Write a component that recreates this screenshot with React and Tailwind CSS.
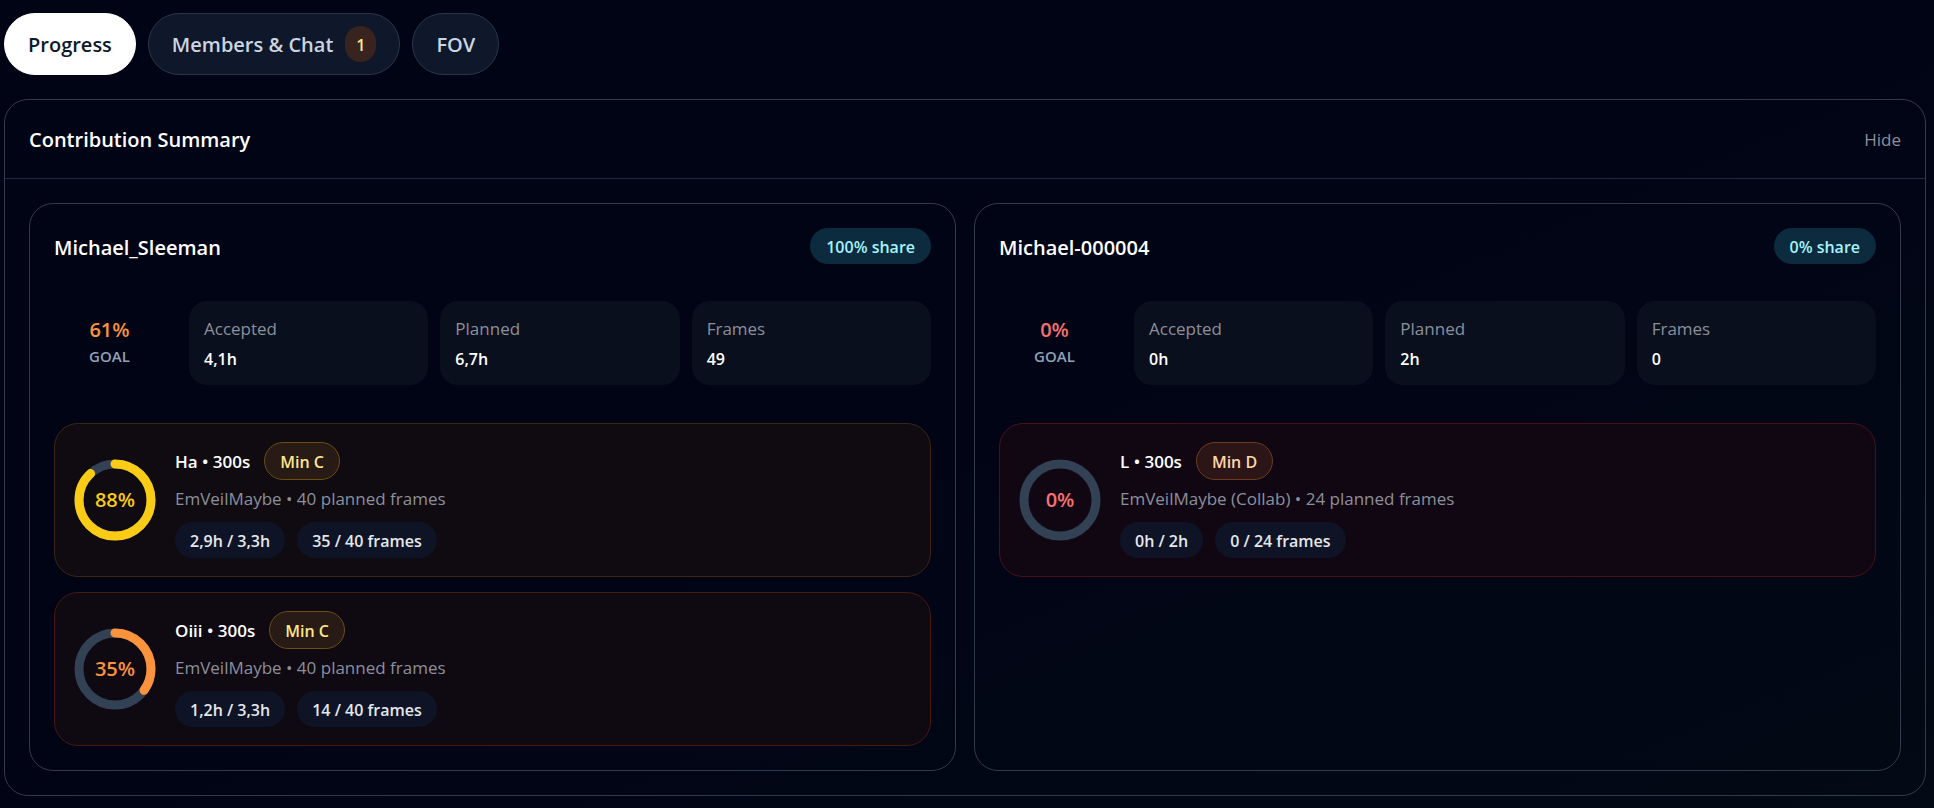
import React, { useState } from 'react';
import clsx from 'clsx';

const tabs = [
  { id: 'progress', label: 'Progress' },
  { id: 'members', label: 'Members & Chat', badge: 1 },
  { id: 'fov', label: 'FOV' },
];

const contributors = [
  {
    name: 'Michael_Sleeman',
    share: '100% share',
    goal: '61%',
    goalColor: 'text-[#fb923c]',
    stats: [
      { label: 'Accepted', value: '4,1h' },
      { label: 'Planned', value: '6,7h' },
      { label: 'Frames', value: '49' },
    ],
    filters: [
      {
        title: 'Ha • 300s',
        min: 'C',
        percent: 88,
        tone: 'yellow',
        meta: 'EmVeilMaybe • 40 planned frames',
        hours: '2,9h / 3,3h',
        frames: '35 / 40 frames',
      },
      {
        title: 'Oiii • 300s',
        min: 'C',
        percent: 35,
        tone: 'orange',
        meta: 'EmVeilMaybe • 40 planned frames',
        hours: '1,2h / 3,3h',
        frames: '14 / 40 frames',
      },
    ],
  },
  {
    name: 'Michael-000004',
    share: '0% share',
    goal: '0%',
    goalColor: 'text-[#f87171]',
    stats: [
      { label: 'Accepted', value: '0h' },
      { label: 'Planned', value: '2h' },
      { label: 'Frames', value: '0' },
    ],
    filters: [
      {
        title: 'L • 300s',
        min: 'D',
        percent: 0,
        tone: 'red',
        meta: 'EmVeilMaybe (Collab) • 24 planned frames',
        hours: '0h / 2h',
        frames: '0 / 24 frames',
      },
    ],
  },
];

const tones = {
  yellow: { card: 'border-[#3f2412] bg-[#0f0b11]', text: 'text-[#facc15]', stroke: '#facc15' },
  orange: { card: 'border-[#47190f] bg-[#0f0912]', text: 'text-[#fb923c]', stroke: '#fb923c' },
  red: { card: 'border-[#49101a] bg-[#110713]', text: 'text-[#f87171]', stroke: '#f87171' },
};

const minStyles = {
  C: 'border-[#6b4d15] bg-[#281a14] text-[#fde68a]',
  D: 'border-[#6d3c1d] bg-[#2b1517] text-[#fed7aa]',
};

const ProgressRing = ({ percent, tone }) => {
  const radius = 36;
  const length = 2 * Math.PI * radius;

  return (
    <div className="grid shrink-0 place-items-center">
      <svg className="col-start-1 row-start-1 size-[82px] -rotate-90" viewBox="0 0 82 82" fill="none">
        <circle cx="41" cy="41" r={radius} stroke="#334155" strokeWidth="9" />
        {percent > 0 && (
          <circle
            cx="41"
            cy="41"
            r={radius}
            stroke={tones[tone].stroke}
            strokeWidth="9"
            strokeLinecap="round"
            strokeDasharray={length}
            strokeDashoffset={length * (1 - percent / 100)}
          />
        )}
      </svg>
      <span className={clsx('col-start-1 row-start-1 text-xl font-semibold', tones[tone].text)}>
        {percent}%
      </span>
    </div>
  );
};

const Chip = ({ children }) => (
  <span className="rounded-full bg-[#0e1425] px-[15px] pt-[7px] pb-[5px] text-base font-semibold text-[#e5e7eb]">
    {children}
  </span>
);

const FilterCard = ({ filter }) => (
  <div className={clsx('flex items-center gap-[19px] rounded-3xl border px-[19px] py-[18px]', tones[filter.tone].card)}>
    <ProgressRing percent={filter.percent} tone={filter.tone} />
    <div className="min-w-0">
      <div className="flex items-center gap-[14px]">
        <h4 className="pt-0.5 text-[17px] font-semibold text-white">{filter.title}</h4>
        <span className={clsx('rounded-full border px-[15px] pt-[7px] pb-[5px] text-base font-semibold', minStyles[filter.min])}>
          Min {filter.min}
        </span>
      </div>
      <p className="mt-[7px] text-[17px] leading-6 text-[#8b909c]">{filter.meta}</p>
      <div className="mt-[11px] flex gap-3">
        <Chip>{filter.hours}</Chip>
        <Chip>{filter.frames}</Chip>
      </div>
    </div>
  </div>
);

const ContributorCard = ({ contributor }) => (
  <article className="rounded-3xl border border-[#323b4b] p-6">
    <div className="flex items-center justify-between">
      <h3 className="pt-1 text-xl leading-8 font-semibold text-white">{contributor.name}</h3>
      <span className="rounded-full bg-[#0c2b3e] px-4 pt-[7px] pb-[5px] text-base font-semibold text-[#a5f3fc]">
        {contributor.share}
      </span>
    </div>

    {/* Totals */}
    <div className="mt-[37px] flex items-center gap-6">
      <div className="w-[111px] shrink-0 pb-0.5 text-center font-semibold">
        <p className={clsx('text-xl leading-7', contributor.goalColor)}>{contributor.goal}</p>
        <p className="text-[15px] leading-6 text-slate-400">GOAL</p>
      </div>
      <dl className="grid flex-1 grid-cols-3 gap-3">
        {contributor.stats.map((stat) => (
          <div key={stat.label} className="rounded-[18px] bg-[#0a0f1d] px-[15px] pt-4 pb-[14px]">
            <dt className="text-[17px] leading-6 text-[#8b909c]">{stat.label}</dt>
            <dd className="mt-[6px] text-base font-semibold text-white">{stat.value}</dd>
          </div>
        ))}
      </dl>
    </div>

    {/* Filters */}
    <div className="mt-[38px] space-y-[15px]">
      {contributor.filters.map((filter) => (
        <FilterCard key={filter.title} filter={filter} />
      ))}
    </div>
  </article>
);

export default function App() {
  const [activeTab, setActiveTab] = useState('progress');
  const [open, setOpen] = useState(true);

  return (
    <main className="min-h-screen bg-linear-to-br from-[#010415] from-50% to-[#020a15] pt-[13px] pr-2 pb-3 pl-1 font-['Open_Sans',sans-serif]">
      <nav className="flex gap-3">
        {tabs.map((tab) => (
          <button
            key={tab.id}
            type="button"
            onClick={() => setActiveTab(tab.id)}
            className={clsx(
              'flex h-[62px] items-center gap-3 rounded-full border px-[23px] text-xl font-semibold',
              activeTab === tab.id
                ? 'border-white bg-white text-slate-900'
                : 'border-[#2b3648] bg-[#0f172a] text-slate-300'
            )}
          >
            <span className="pt-0.5">{tab.label}</span>
            {tab.badge && (
              <span className="rounded-full bg-[#39231f] px-[11px] pt-[7px] pb-[5px] text-base font-semibold text-[#fde68a]">
                {tab.badge}
              </span>
            )}
          </button>
        ))}
      </nav>

      <section className="mt-6 rounded-3xl border border-[#323b4b]">
        <header className="flex items-center justify-between border-b border-[#1e293b] px-6 pt-[25px] pb-[23px]">
          <h2 className="text-xl leading-[30px] font-semibold text-white">Contribution Summary</h2>
          <button type="button" onClick={() => setOpen(!open)} className="text-[17px] text-[#8b909c]">
            {open ? 'Hide' : 'Show'}
          </button>
        </header>
        {open && (
          <div className="grid grid-cols-2 gap-[18px] p-6">
            {contributors.map((contributor) => (
              <ContributorCard key={contributor.name} contributor={contributor} />
            ))}
          </div>
        )}
      </section>
    </main>
  );
}
